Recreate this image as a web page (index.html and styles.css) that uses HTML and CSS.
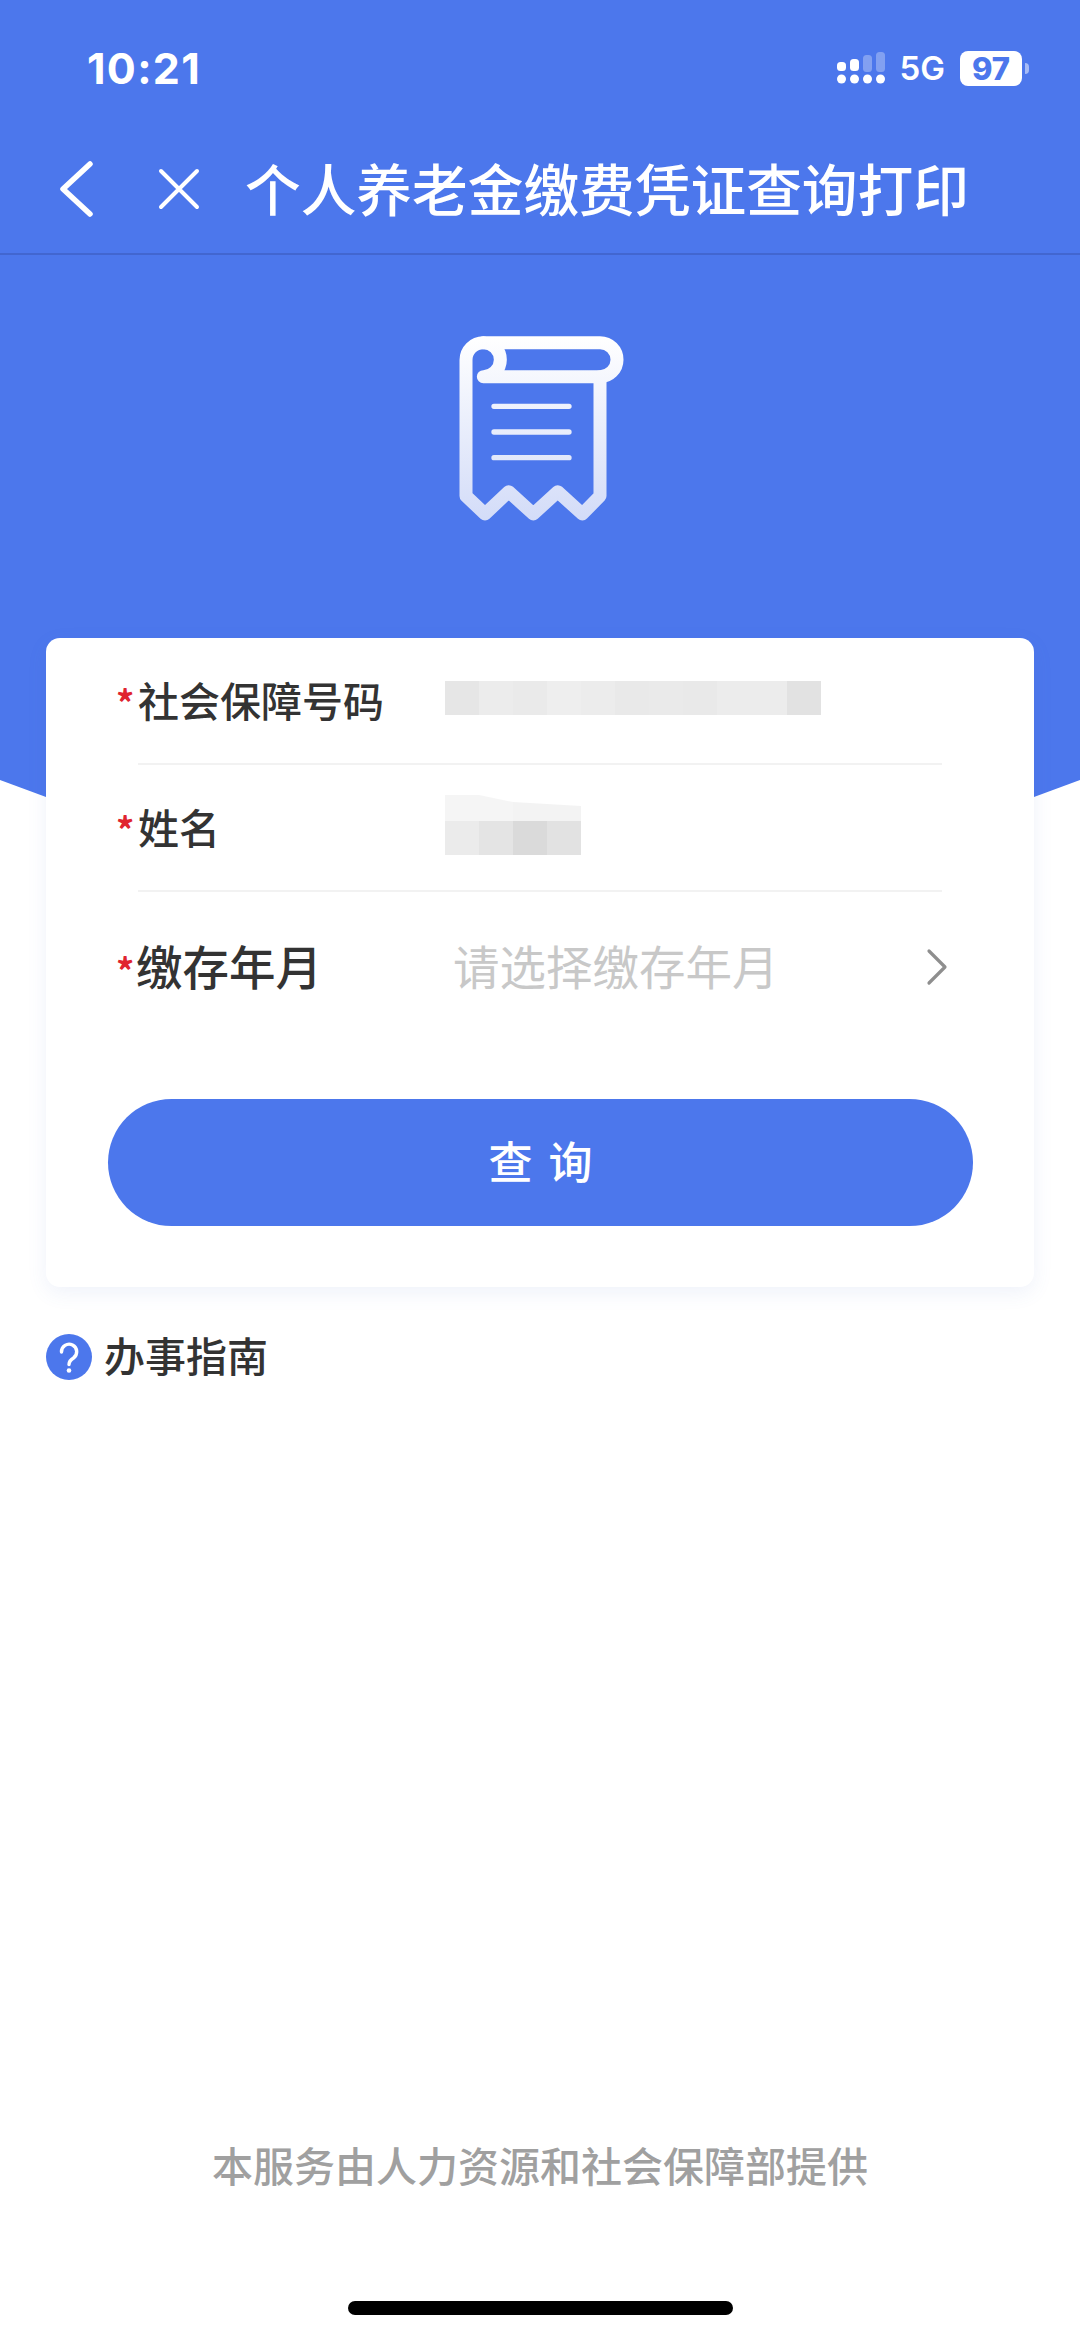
FILE: index.html
```html
<!DOCTYPE html>
<html lang="zh-CN">
<head>
    <meta charset="UTF-8">
    <meta name="viewport" content="width=device-width, initial-scale=1.0">
    <title>个人养老金缴费凭证查询打印</title>
    <link rel="stylesheet" href="styles.css">
</head>
<body>
    <div class="page">
        <header class="hero">
            <!-- Status bar -->
            <div class="status-bar">
                <span class="clock">10:21</span>
                <div class="status-right">
                    <svg class="signal" width="48" height="32" viewBox="0 0 48 32">
                        <g fill="#fff">
                            <rect x="0" y="10" width="9" height="9" rx="3.5"/>
                            <rect x="13" y="7" width="9" height="12" rx="3.5"/>
                            <circle cx="4.5" cy="27" r="4.5"/>
                            <circle cx="17.5" cy="27" r="4.5"/>
                            <circle cx="30.5" cy="27" r="4.5"/>
                            <circle cx="43.5" cy="27" r="4.5"/>
                        </g>
                        <g fill="#fff" opacity=".3">
                            <rect x="26" y="3" width="9" height="17" rx="3.5"/>
                            <rect x="39" y="0" width="9" height="20" rx="3.5"/>
                        </g>
                    </svg>
                    <span class="net">5G</span>
                    <span class="battery">97</span>
                    <span class="battery-nub"></span>
                </div>
            </div>

            <!-- Nav bar -->
            <nav class="nav-bar">
                <svg class="nav-back" width="36" height="56" viewBox="0 0 36 56">
                    <path d="M32 3 L5 28 L32 53" fill="none" stroke="#fff" stroke-width="5.5" stroke-linecap="round" stroke-linejoin="round"/>
                </svg>
                <svg class="nav-close" width="42" height="42" viewBox="0 0 42 42">
                    <path d="M3 3 L39 39 M39 3 L3 39" fill="none" stroke="#fff" stroke-width="4" stroke-linecap="round"/>
                </svg>
                <h1 class="nav-title">个人养老金缴费凭证查询打印</h1>
            </nav>

            <svg class="receipt" width="240" height="230" viewBox="0 0 720 690">
                <defs>
                    <linearGradient id="receiptFill" gradientUnits="userSpaceOnUse" x1="0" y1="80" x2="0" y2="630">
                        <stop offset="0" stop-color="#fff"/>
                        <stop offset="1" stop-color="#d3dcf8"/>
                    </linearGradient>
                </defs>
                <g fill="none" stroke="url(#receiptFill)" stroke-linecap="round" stroke-linejoin="round">
                    <path stroke-width="39" d="M190 200 H540 A51 51 0 0 0 540 98 H190 A51 51 0 0 1 190 200"/>
                    <path stroke-width="39" d="M190 98 A52 52 0 0 0 138 150 V558 L195 612 L266 545 L340 612 L413 545 L487 612 L540 558 V200"/>
                    <path stroke-width="16" d="M222 289 H447 M222 366 H447 M222 443 H447"/>
                </g>
            </svg>
        </header>

        <!-- Query form -->
        <section class="card">
            <div class="row row-first">
                <span class="label"><i class="star">*</i>社会保障号码</span>
                <div class="mosaic-id"></div>
            </div>
            <div class="row row-name">
                <span class="label"><i class="star">*</i>姓名</span>
                <div class="mosaic-name">
                    <div class="mosaic-name-top"></div>
                    <div class="mosaic-name-bottom"></div>
                </div>
            </div>
            <div class="row row-date">
                <span class="label label-large"><i class="star">*</i>缴存年月</span>
                <span class="placeholder">请选择缴存年月</span>
                <svg class="row-arrow" width="22" height="38" viewBox="0 0 22 38">
                    <path d="M3 3 L19 19 L3 35" fill="none" stroke="#8e8e8e" stroke-width="3.2" stroke-linecap="round" stroke-linejoin="round"/>
                </svg>
            </div>
            <button class="query-btn">查询</button>
        </section>

        <div class="guide">
            <svg class="guide-icon" width="46" height="46" viewBox="0 0 46 46">
                <circle cx="23" cy="23" r="23" fill="#4c77ec"/>
                <path d="M15.5 18 A7.6 7.6 0 1 1 27.5 24 C24.2 26 23 27.4 23 30.5" fill="none" stroke="#fff" stroke-width="3.4" stroke-linecap="round"/>
                <circle cx="23" cy="36.5" r="2.3" fill="#fff"/>
            </svg>
            <span class="guide-text">办事指南</span>
        </div>

        <footer class="provider">本服务由人力资源和社会保障部提供</footer>
        <div class="home-bar"></div>
    </div>
</body>
</html>
```

FILE: styles.css
```css
* {
    box-sizing: border-box;
}
body {
    margin: 0;
    background-color: #fff;
    font-family: "Noto Sans CJK SC", "Liberation Sans", sans-serif;
}
.page {
    display: flex;
    flex-direction: column;
    width: 1080px;
    height: 2337px;
    overflow: hidden;
}

/* Blue top area */
.hero {
    flex-shrink: 0;
    display: flex;
    flex-direction: column;
    height: 822px;
    background-color: #4c77ec;
    clip-path: polygon(0 0, 100% 0, 100% 780px, 1034px 797px, 540px 822px, 46px 797px, 0 780px);
}
.status-bar {
    display: flex;
    justify-content: space-between;
    align-items: center;
    height: 125px;
    padding: 11px 51px 0 87px;
    color: #fff;
}
.clock {
    font-family: Inter, "Liberation Sans", sans-serif;
    font-size: 43px;
    font-weight: 700;
    letter-spacing: 1.3px;
}
.status-right {
    display: flex;
    align-items: center;
}
.signal {
    margin-right: 15px;
}
.net {
    margin-right: 15px;
    font-family: Inter, "Liberation Sans", sans-serif;
    font-size: 33px;
    font-weight: 600;
}
.battery {
    width: 62px;
    height: 35px;
    border-radius: 8px;
    background-color: #fff;
    color: #4c77ec;
    font-family: Inter, "Liberation Sans", sans-serif;
    font-size: 31px;
    font-weight: 800;
    line-height: 35px;
    text-align: center;
}
.battery-nub {
    width: 4px;
    height: 11px;
    margin-left: 3px;
    border-radius: 0 4px 4px 0;
    background-color: rgba(255, 255, 255, .5);
}
.nav-bar {
    display: flex;
    align-items: center;
    height: 130px;
    padding-left: 58px;
    border-bottom: 2px solid #4266d0;
}
.nav-back {
    margin-right: 64px;
}
.nav-close {
    margin-right: 45px;
}
.nav-title {
    margin: 0 0 5px;
    color: #fff;
    font-size: 55.7px;
    font-weight: 500;
    white-space: nowrap;
}
.receipt {
    align-self: center;
    margin-top: 55px;
}

/* Form card */
.card {
    position: relative;
    flex-shrink: 0;
    width: 988px;
    height: 649px;
    margin: -184px 0 0 46px;
    border-radius: 14px;
    background-color: #fff;
    box-shadow: 0 6px 20px rgba(80, 110, 200, .09);
}
.row {
    display: flex;
    align-items: center;
    margin: 0 92px;
}
.row-first {
    height: 127px;
    border-bottom: 2px solid #f2f2f2;
}
.row-name {
    height: 127px;
    border-bottom: 2px solid #f2f2f2;
}
.row-date {
    height: 150px;
}
.label {
    flex-shrink: 0;
    width: 307px;
    margin-bottom: 3px;
    color: #333;
    font-size: 41px;
    font-weight: 500;
    white-space: nowrap;
}
.label-large {
    width: 317px;
    margin: 0 0 5px -2px;
    font-size: 46.5px;
}
.star {
    display: inline-block;
    width: 22px;
    margin-left: -22px;
    color: #e0242f;
    font-size: 36px;
    font-style: normal;
    font-weight: 700;
    text-align: left;
}
.label-large .star {
    margin-left: -20px;
    width: 20px;
}
.mosaic-id {
    width: 376px;
    height: 34px;
    margin-top: -5px;
    background: linear-gradient(90deg,
        #e6e6e6 0 34px, #ececec 34px 68px, #eaeaea 68px 102px, #eeeeee 102px 136px,
        #ececec 136px 170px, #e9e9e9 170px 204px, #eaeaea 204px 238px, #e9e9e9 238px 272px,
        #ececec 272px 342px, #e2e2e2 342px 376px);
}
.mosaic-name {
    width: 136px;
    margin-top: -5px;
}
.mosaic-name-top {
    height: 26px;
    background: linear-gradient(90deg, #f5f5f5 0 68px, #f3f3f3 68px 136px);
    clip-path: polygon(0 0, 34px 0, 68px 7px, 102px 9px, 136px 11px, 136px 100%, 0 100%);
}
.mosaic-name-bottom {
    height: 34px;
    background: linear-gradient(90deg,
        #ebebeb 0 34px, #e4e4e4 34px 68px, #dadada 68px 102px, #e2e2e2 102px 136px);
}
.placeholder {
    flex: 1;
    margin-bottom: 5px;
    color: #c8c8c8;
    font-size: 46.5px;
    white-space: nowrap;
}
.row-arrow {
    margin-right: -6px;
}
.query-btn {
    display: block;
    width: 865px;
    height: 127px;
    margin: 57px 0 0 62px;
    padding: 0 0 5px;
    border: 0;
    border-radius: 64px;
    background-color: #4c77ec;
    color: #fff;
    font-family: inherit;
    font-size: 44px;
    font-weight: 500;
    letter-spacing: 16px;
    text-indent: 16px;
}

/* Guide link */
.guide {
    display: flex;
    align-items: center;
    margin: 37px 0 0 46px;
}
.guide-icon {
    margin-right: 12px;
}
.guide-text {
    margin-bottom: 6px;
    color: #333;
    font-size: 41px;
    font-weight: 500;
}

/* Bottom */
.provider {
    margin-top: auto;
    color: #a0a0a0;
    font-size: 41px;
    font-weight: 500;
    text-align: center;
    white-space: nowrap;
}
.home-bar {
    flex-shrink: 0;
    width: 385px;
    height: 14px;
    margin: 107px 0 22px 348px;
    border-radius: 7px;
    background-color: #000;
}
```
